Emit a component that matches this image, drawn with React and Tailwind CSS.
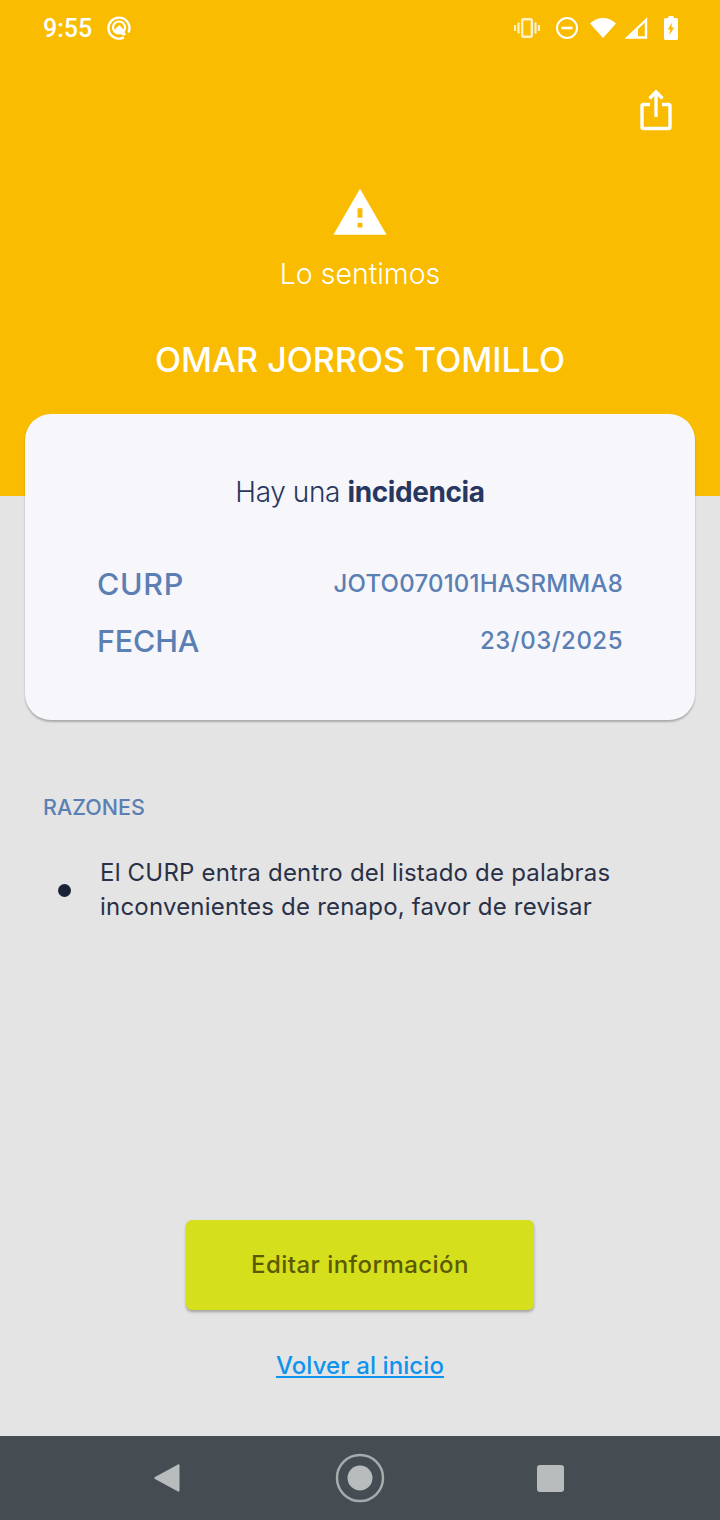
function StatusBar() {
    return (
        <div className="flex h-[56px] items-center justify-between pl-[43px] pr-[42px] text-white">
            <div className="flex items-center gap-[15px]">
                <span className="font-['Roboto',sans-serif] text-[25px] font-medium leading-none">9:55</span>
                <svg width="24" height="24" viewBox="0 0 24 24" fill="none">
                    <path d="M16 21.800A10.500 10.500 0 1 1 21.900 15.500" stroke="white" strokeWidth="2.400" strokeLinecap="round" />
                    <circle cx="12" cy="11.500" r="6" stroke="white" strokeWidth="2.200" />
                    <path d="M6.500 14.500L12.500 9L16.500 13.500L19 19L15.500 19.500L13 17L8 16.500z" fill="white" />
                </svg>
            </div>
            <div className="flex items-center">
                <svg width="26" height="20" viewBox="0 0 26 20" fill="none" className="opacity-80">
                    <rect x="8.200" y="1.200" width="9.600" height="17.600" rx="1.500" stroke="white" strokeWidth="2.400" />
                    <path d="M1 7v6M4.500 4.500v11M21.500 4.500v11M25 7v6" stroke="white" strokeWidth="2.200" />
                </svg>
                <svg width="24" height="24" viewBox="0 0 24 24" fill="none" className="ml-[15px]">
                    <circle cx="12" cy="12" r="10" stroke="white" strokeWidth="2" />
                    <rect x="6.500" y="10.700" width="11" height="2.600" fill="white" />
                </svg>
                <svg width="28" height="22" viewBox="0 0 28 22" fill="white" className="ml-[10px]">
                    <path d="M1 6.500C4.500 3 9 1 14 1s9.500 2 13 5.500L14 21z" />
                </svg>
                <svg width="24" height="22" viewBox="0 0 24 22" fill="none" className="ml-[7px]">
                    <path d="M22 3L3.500 20.500H22Z" stroke="white" strokeWidth="2.400" strokeLinejoin="miter" />
                    <path d="M14 20.500V10.500L3 20.500Z" fill="white" />
                </svg>
                <svg width="14" height="24" viewBox="0 0 14 24" fill="white" className="ml-[16px]">
                    <path fillRule="evenodd" d="M4.500 0h5v2H12.500c.8 0 1.500.7 1.500 1.500V22.500c0 .8-.7 1.500-1.500 1.500H1.500C.7 24 0 23.300 0 22.500V3.500C0 2.700.7 2 1.500 2H4.500zM8 6.500L3.800 13.500H6.200L5.500 19l4.700-7.500H7.500z" />
                </svg>
            </div>
        </div>
    );
}

function NavBar() {
    return (
        <div className="flex h-[84px] shrink-0 items-center bg-[#454c52]">
            <div className="flex w-full items-center justify-between pl-[154px] pr-[156px]">
                <svg width="26" height="30" viewBox="0 0 26 30" fill="#b8bcbd">
                    <path d="M24 1.500c.8-.5 1.500 0 1.500 1v25c0 1-.7 1.500-1.500 1L1 16c-1-.6-1-1.400 0-2z" />
                </svg>
                <svg width="50" height="50" viewBox="0 0 50 50" fill="none" className="translate-x-[1px]">
                    <circle cx="25" cy="25" r="23" stroke="#b8bcbd" strokeOpacity="0.85" strokeWidth="2.500" />
                    <circle cx="25" cy="25" r="12.500" fill="#b8bcbd" />
                </svg>
                <div className="h-[27px] w-[27px] rounded-[3px] bg-[#b8bcbd]" />
            </div>
        </div>
    );
}

function App() {
    return (
        <div className="flex h-[1520px] w-[720px] flex-col overflow-hidden bg-[#e4e4e4] font-['Inter',sans-serif]">
            <div className="flex-1">
                <div className="h-[496px] bg-[#f9bc00] text-white">
                    <StatusBar />
                    <div className="flex justify-end pr-[48px] pt-[33px]">
                        <svg width="32" height="42" viewBox="0 0 32 42" fill="none" stroke="white" strokeWidth="3.400">
                            <path d="M16 3V28" />
                            <path d="M9.500 9.500L16 3l6.500 6.500" />
                            <path d="M10 15.500H3.500a1.500 1.500 0 0 0-1.500 1.500V38a1.500 1.500 0 0 0 1.500 1.500H28.500a1.500 1.500 0 0 0 1.500-1.500V17a1.500 1.500 0 0 0-1.500-1.500H22" />
                        </svg>
                    </div>
                    <div className="flex flex-col items-center">
                        <svg width="58" height="58" viewBox="0 0 24 24" fill="white" className="mt-[53px]">
                            <path d="M1 21h22L12 2 1 21zm12-3h-2v-2h2v2zm0-4h-2v-4h2v4z" />
                        </svg>
                        <div className="mt-[15px] text-[28.500px] font-light leading-[34px]">Lo sentimos</div>
                        <div className="mt-[49px] text-[34px] font-medium leading-[40px]">OMAR JORROS TOMILLO</div>
                    </div>
                </div>
                <div className="relative mx-[25px] -mt-[82px] h-[306px] rounded-[26px] bg-[#f6f6fb] px-[72px] shadow-[0_2px_2px_rgba(0,0,0,0.25)]">
                    <div className="pt-[60px] text-center text-[28px] font-light leading-[36px] tracking-[-0.4px] text-[#28375f]">
                        Hay una <span className="font-bold">incidencia</span>
                    </div>
                    <div className="mt-[54px] flex items-center justify-between text-[#5b7fb3]">
                        <span className="text-[30.500px] font-medium leading-[40px] tracking-[0.7px]">CURP</span>
                        <span className="text-[24px] font-medium leading-[40px] tracking-[0.2px]">JOTO070101HASRMMA8</span>
                    </div>
                    <div className="mt-[17px] flex items-center justify-between text-[#5b7fb3]">
                        <span className="text-[30.500px] font-medium leading-[40px] tracking-[-0.2px]">FECHA</span>
                        <span className="text-[24px] font-medium leading-[40px] tracking-[0.5px]">23/03/2025</span>
                    </div>
                </div>
                <div className="mt-[74px] pl-[43px] text-[21.500px] font-medium leading-[26px] text-[#5b7fb3]">RAZONES</div>
                <div className="mt-[36px] flex items-center pl-[58px]">
                    <div className="h-[13px] w-[13px] rounded-full bg-[#1a2238]" />
                    <p className="ml-[29px] text-[24px] leading-[34px] tracking-[0.2px] text-[#2a3147]">
                        El CURP entra dentro del listado de palabras
                        <br />
                        inconvenientes de renapo, favor de revisar
                    </p>
                </div>
                <div className="mt-[296px] flex flex-col items-center">
                    <button className="flex h-[90px] w-[348px] items-center justify-center rounded-[6px] bg-[#d5df1b] text-[24px] font-medium tracking-[0.45px] text-[#5a5a00] shadow-[0_2px_3px_rgba(0,0,0,0.3)]">
                        Editar información
                    </button>
                    <a className="mt-[39px] text-[24px] font-medium leading-[34px] tracking-[0.1px] text-[#0f94ee] underline">Volver al inicio</a>
                </div>
            </div>
            <NavBar />
        </div>
    );
}

export default App;
